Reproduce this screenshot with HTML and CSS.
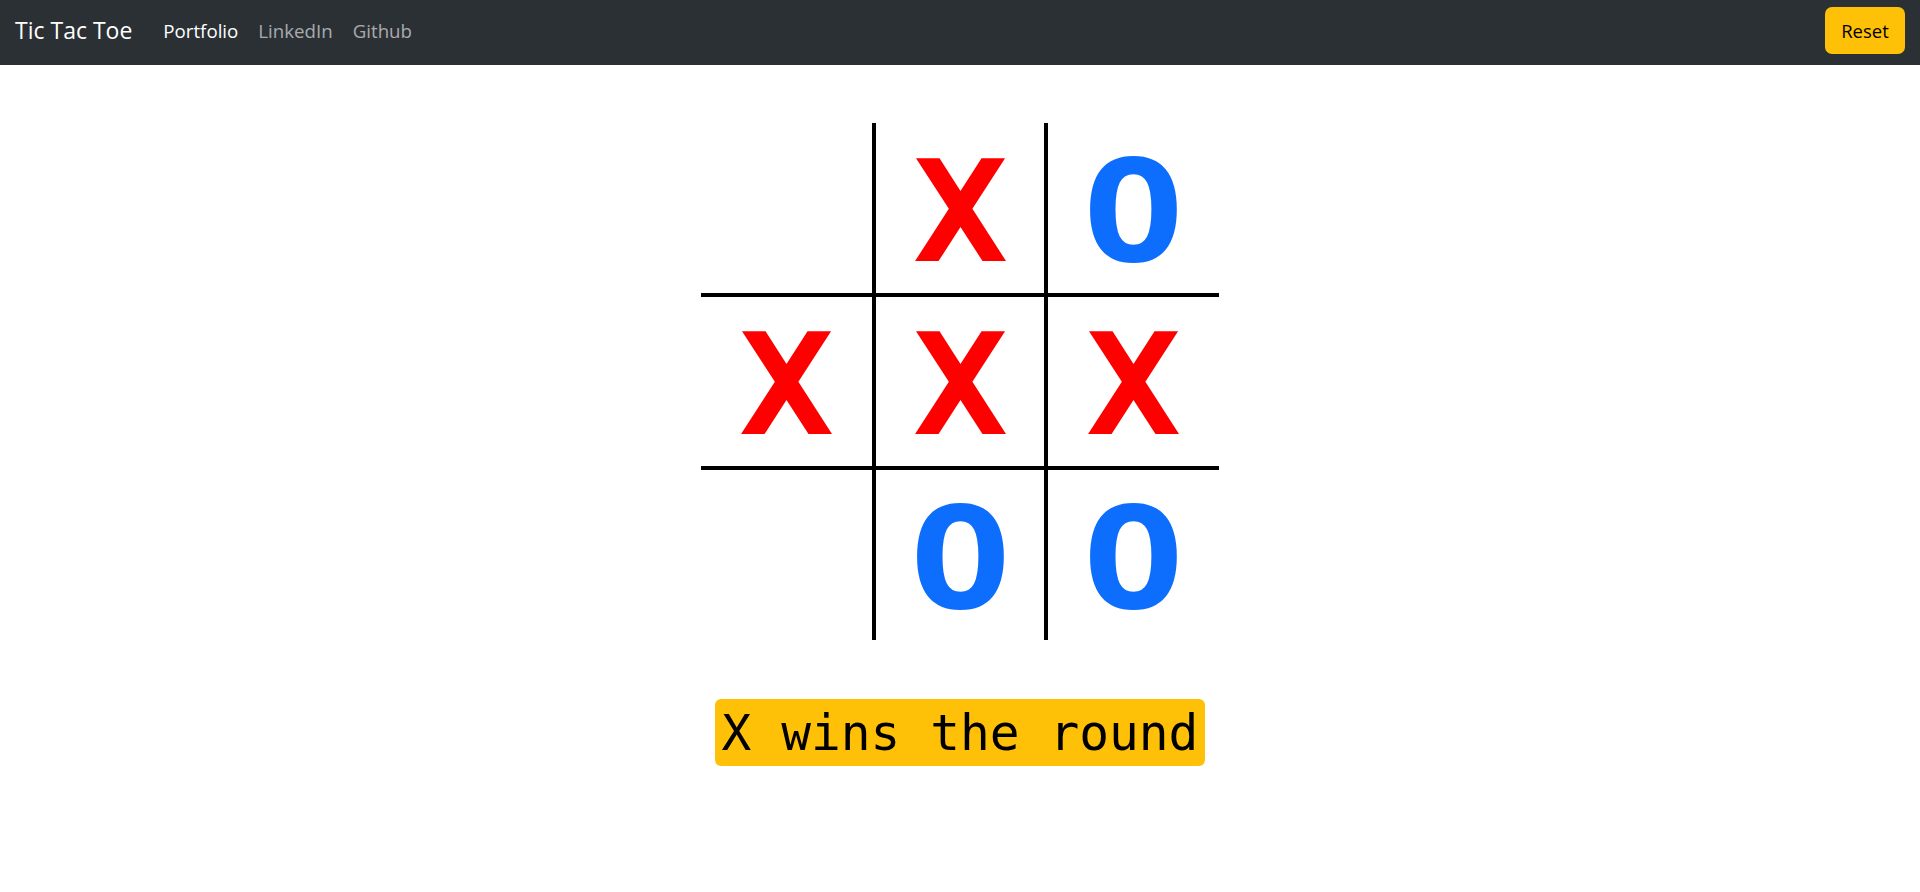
FILE: index.html
```html
<!DOCTYPE html>
<html lang="en">
<head>
<meta charset="utf-8">
<title>Tic Tac Toe</title>
<link rel="stylesheet" href="styles.css">
</head>
<body>
<nav class="navbar">
  <div class="nav-left">
    <a class="brand" href="#">Tic Tac Toe</a>
    <ul class="nav-links">
      <li><a class="nav-link active" href="#">Portfolio</a></li>
      <li><a class="nav-link" href="#">LinkedIn</a></li>
      <li><a class="nav-link" href="#">Github</a></li>
    </ul>
  </div>
  <button class="btn-reset" type="button">Reset</button>
</nav>
<main class="game">
  <div class="board">
    <div class="cell"></div>
    <div class="cell mid-col x"><span class="mark">X</span></div>
    <div class="cell o"><span class="mark">O</span></div>
    <div class="cell mid-row x"><span class="mark">X</span></div>
    <div class="cell mid-col mid-row x"><span class="mark">X</span></div>
    <div class="cell mid-row x"><span class="mark">X</span></div>
    <div class="cell"></div>
    <div class="cell mid-col o"><span class="mark">O</span></div>
    <div class="cell o"><span class="mark">O</span></div>
  </div>
  <div class="message">X wins the round</div>
</main>
</body>
</html>
```

FILE: styles.css
```css
* { box-sizing: border-box; }
html, body { margin: 0; padding: 0; }
body {
  font-family: "Open Sans", "Noto Sans", sans-serif;
  background: #fff;
  color: #212529;
}
.navbar {
  height: 65px;
  background: #2b3035;
  display: flex;
  align-items: center;
  justify-content: space-between;
  padding: 0 15px 5px 15px;
}
.nav-left {
  display: flex;
  align-items: center;
}
.brand {
  color: #fff;
  text-decoration: none;
  font-size: 23px;
  margin-right: 21px;
}
.nav-links {
  list-style: none;
  display: flex;
  margin: 0;
  padding: 0;
}
.nav-link {
  display: block;
  padding: 0 10px;
  font-size: 18.7px;
  color: rgba(255, 255, 255, 0.6);
  text-decoration: none;
}
.nav-link.active { color: #fff; }
.btn-reset {
  background: #ffc107;
  border: none;
  border-radius: 7px;
  height: 47px;
  width: 80px;
  font-family: inherit;
  font-size: 18.5px;
  color: #000;
  padding: 0;
}
.game {
  display: flex;
  flex-direction: column;
  align-items: center;
  padding-top: 58px;
}
.board {
  display: grid;
  grid-template-columns: 171px 176px 171px;
  grid-template-rows: 170px 177px 170px;
}
.cell {
  display: flex;
  align-items: center;
  justify-content: center;
  padding-top: 8px;
  font-family: "DejaVu Sans Mono", monospace;
  font-weight: bold;
  font-size: 141px;
  line-height: 1;
}
.mark {
  display: inline-block;
}
.x .mark { transform: scaleX(1.12); }
.o .mark { transform: scaleX(1.2); }
.mid-col {
  border-left: 4px solid #000;
  border-right: 4px solid #000;
}
.mid-row {
  border-top: 4px solid #000;
  border-bottom: 4px solid #000;
}
.x { color: #ff0000; }
.o { color: #0d6efd; }
.message {
  margin-top: 59px;
  background: #ffc107;
  border-radius: 6px;
  height: 67px;
  display: flex;
  align-items: center;
  padding: 0 7px;
  font-family: "DejaVu Sans Mono", monospace;
  font-size: 49.5px;
  color: #000;
}
```
